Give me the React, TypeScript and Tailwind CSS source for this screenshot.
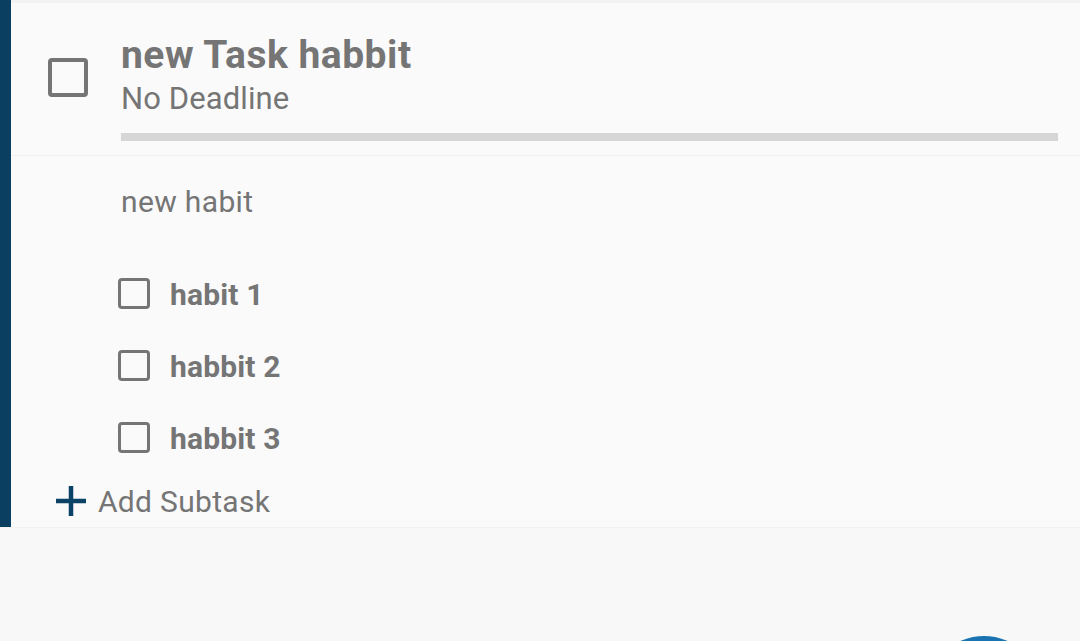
import React from "react";

function Box({ size, border }: { size: string; border: string }) {
  return <div className={`${size} ${border} shrink-0 rounded-[4px] border-[#757575]`} />;
}

export default function App() {
  const subtasks = ["habit 1", "habbit 2", "habbit 3"];
  return (
    <div
      className="relative w-[1080px] h-[641px] overflow-hidden bg-[#f8f8f8] text-[#757575]"
      style={{ fontFamily: "Roboto, 'Noto Sans', sans-serif" }}
    >
      <div className="flex h-[528px] bg-[#fafafa] border-b border-[#f2f2f2]">
        <div className="w-[11px] shrink-0 bg-[#0b3f62]" />
        <div className="flex flex-1 flex-col">
          <div className="h-[3px] bg-[#f2f2f2]" />
          <div className="flex border-b border-[#f0f0f0] pb-[14px] pr-[22px]">
            <div className="ml-[37px] mt-[55px] self-start">
              <div className="h-[39px] w-[40px] rounded-[4px] border-[4px] border-[#757575]" />
            </div>
            <div className="ml-[33px] flex flex-1 flex-col pt-[29px]">
              <div className="text-[39px] font-bold leading-[46px] tracking-[0.5px]">new Task habbit</div>
              <div className="mt-[3px] text-[31px] leading-[36px] tracking-[0.1px]">No Deadline</div>
              <div className="mt-[16px] h-[8px] bg-[#d6d6d6]" />
            </div>
          </div>
          <div className="flex flex-col">
            <div className="ml-[110px] pt-[28px] text-[30px] leading-[36px] tracking-[0.35px]">new habit</div>
            <div className="mt-[39px] flex flex-col">
              {subtasks.map((s) => (
                <div key={s} className="flex h-[72px] items-center pl-[107px]">
                  <div className="mb-[3px]">
                    <Box size="h-[31px] w-[32px]" border="border-[3px]" />
                  </div>
                  <div className="ml-[20px] text-[30px] font-bold leading-[36px] tracking-[0.15px]">{s}</div>
                </div>
              ))}
            </div>
            <div className="mt-[9px] flex items-center pl-[44px]">
              <svg width="32" height="32" viewBox="0 0 32 32" className="mb-[3px] shrink-0">
                <path d="M16 1V31M1 16H31" stroke="#0b4266" strokeWidth="4.5" fill="none" />
              </svg>
              <div className="ml-[11px] text-[30px] leading-[36px] tracking-[0.3px]">Add Subtask</div>
            </div>
          </div>
        </div>
      </div>
      <div className="absolute left-[927px] top-[636px] h-[114px] w-[114px] rounded-full bg-[#1a72b0]" />
    </div>
  );
}
